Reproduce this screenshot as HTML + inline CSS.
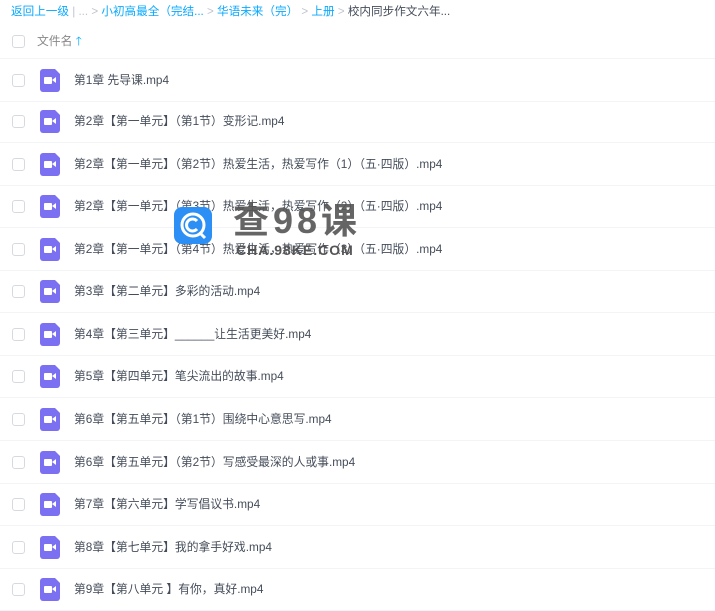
<!DOCTYPE html><html><head><meta charset="utf-8"><style>
body{margin:0;width:715px;height:600px;overflow:hidden;background:#fff;font-family:"Liberation Sans","Noto Sans CJK SC",sans-serif;font-size:11.8px;color:#454d5a;position:relative}
.bc{position:absolute;top:3px;left:11px;font-size:11.6px;color:#09aaff;white-space:nowrap}
.bc .g{color:#c0c4cc}.bc .d{color:#454d5a}
.cb{position:absolute;left:12px;width:13px;height:13px;border:1px solid #d6dae0;border-radius:3px;box-sizing:border-box}
.hd{position:absolute;top:32px;left:37px;color:#888;font-size:11.8px}
.row{position:absolute;left:0;width:715px;height:42px;border-bottom:1px solid #f2f4f8}
.ic{position:absolute;left:40px;top:10px;width:20px;height:23px;background:#7b6ff2;border-radius:3px;clip-path:polygon(0 0,75% 0,100% 22%,100% 100%,0 100%)}
.ic:before{content:"";position:absolute;left:4px;top:8px;width:8px;height:7px;background:#fff;border-radius:1px}
.ic:after{content:"";position:absolute;left:12px;top:8px;border-right:4px solid #fff;border-top:3.5px solid transparent;border-bottom:3.5px solid transparent;width:0;height:0}
.row .cb{top:15px}
.t{position:absolute;left:74px;top:12px;white-space:nowrap}
.wm{position:absolute;left:174px;top:207px;width:38px;height:37px;background:#2b8ff5;border-radius:8px}
.wt{position:absolute;left:233px;top:192px;font-size:36px;font-weight:bold;color:#555;letter-spacing:4px;opacity:.9}
.ws{position:absolute;left:236px;top:242px;font-size:14px;font-weight:bold;color:#555;letter-spacing:1px}
</style></head><body>
<div class="bc">返回上一级 <span class="g">|</span> <span class="g">...</span> <span class="g">&gt;</span> 小初高最全（完结... <span class="g">&gt;</span> 华语未来（完） <span class="g">&gt;</span> 上册 <span class="g">&gt;</span> <span class="d">校内同步作文六年...</span></div>
<div class="cb" style="top:35px"></div>
<div class="hd">文件名 <span style="color:#09aaff">🡑</span></div>
<div class="row" style="top:58px;border-top:1px solid #f2f4f8"><div class="cb"></div><div class="ic"></div><div class="t">第1章 先导课.mp4</div></div>
<div class="row" style="top:100px"><div class="cb"></div><div class="ic"></div><div class="t">第2章【第一单元】（第1节）变形记.mp4</div></div>
<div class="row" style="top:143px"><div class="cb"></div><div class="ic"></div><div class="t">第2章【第一单元】（第2节）热爱生活，热爱写作（1）（五·四版）.mp4</div></div>
<div class="row" style="top:185px"><div class="cb"></div><div class="ic"></div><div class="t">第2章【第一单元】（第3节）热爱生活，热爱写作（2）（五·四版）.mp4</div></div>
<div class="row" style="top:228px"><div class="cb"></div><div class="ic"></div><div class="t">第2章【第一单元】（第4节）热爱生活，热爱写作（3）（五·四版）.mp4</div></div>
<div class="row" style="top:270px"><div class="cb"></div><div class="ic"></div><div class="t">第3章【第二单元】多彩的活动.mp4</div></div>
<div class="row" style="top:313px"><div class="cb"></div><div class="ic"></div><div class="t">第4章【第三单元】______让生活更美好.mp4</div></div>
<div class="row" style="top:355px"><div class="cb"></div><div class="ic"></div><div class="t">第5章【第四单元】笔尖流出的故事.mp4</div></div>
<div class="row" style="top:398px"><div class="cb"></div><div class="ic"></div><div class="t">第6章【第五单元】（第1节）围绕中心意思写.mp4</div></div>
<div class="row" style="top:441px"><div class="cb"></div><div class="ic"></div><div class="t">第6章【第五单元】（第2节）写感受最深的人或事.mp4</div></div>
<div class="row" style="top:483px"><div class="cb"></div><div class="ic"></div><div class="t">第7章【第六单元】学写倡议书.mp4</div></div>
<div class="row" style="top:526px"><div class="cb"></div><div class="ic"></div><div class="t">第8章【第七单元】我的拿手好戏.mp4</div></div>
<div class="row" style="top:568px"><div class="cb"></div><div class="ic"></div><div class="t">第9章【第八单元 】有你，真好.mp4</div></div>
<div class="wm"><svg width="38" height="37" viewBox="0 0 38 37"><circle cx="19" cy="18" r="11" fill="none" stroke="#fff" stroke-width="3"/><path d="M23 14a6 6 0 1 0 0 8" fill="none" stroke="#fff" stroke-width="3"/><path d="M26 26l5 5" stroke="#fff" stroke-width="3"/></svg></div>
<div class="wt">查98课</div>
<div class="ws">CHA.98KE.COM</div>
</body></html>
